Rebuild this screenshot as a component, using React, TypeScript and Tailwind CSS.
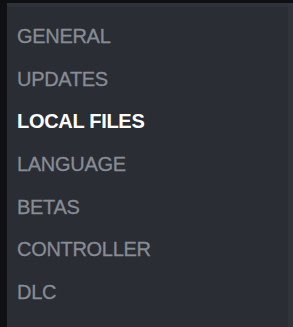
const items = ['GENERAL', 'UPDATES', 'LOCAL FILES', 'LANGUAGE', 'BETAS', 'CONTROLLER', 'DLC']

export default function App() {
  const active = 'LOCAL FILES'
  return (
    <div className="w-[293px] h-[327px] bg-[#0f1013] pt-[3px] pl-[7px] overflow-hidden">
      <div className="h-full flex bg-[#2a2d33]">
        <div className="flex-1 flex flex-col">
          <div className="h-[4px] bg-[#31333a]" />
          <nav className="flex flex-col pt-[8px] pl-[10px] font-['Liberation_Sans',sans-serif]">
            {items.map((item) => (
              <div
                key={item}
                className={`h-[42.6px] flex items-center text-[20px] tracking-[-0.3px] ${
                  item === active ? 'text-white font-bold' : 'text-[#878c95] [-webkit-text-stroke:0.3px_#878c95]'
                }`}
              >
                {item}
              </div>
            ))}
          </nav>
        </div>
        <div className="w-[5px] bg-[#30333a]" />
      </div>
    </div>
  )
}
